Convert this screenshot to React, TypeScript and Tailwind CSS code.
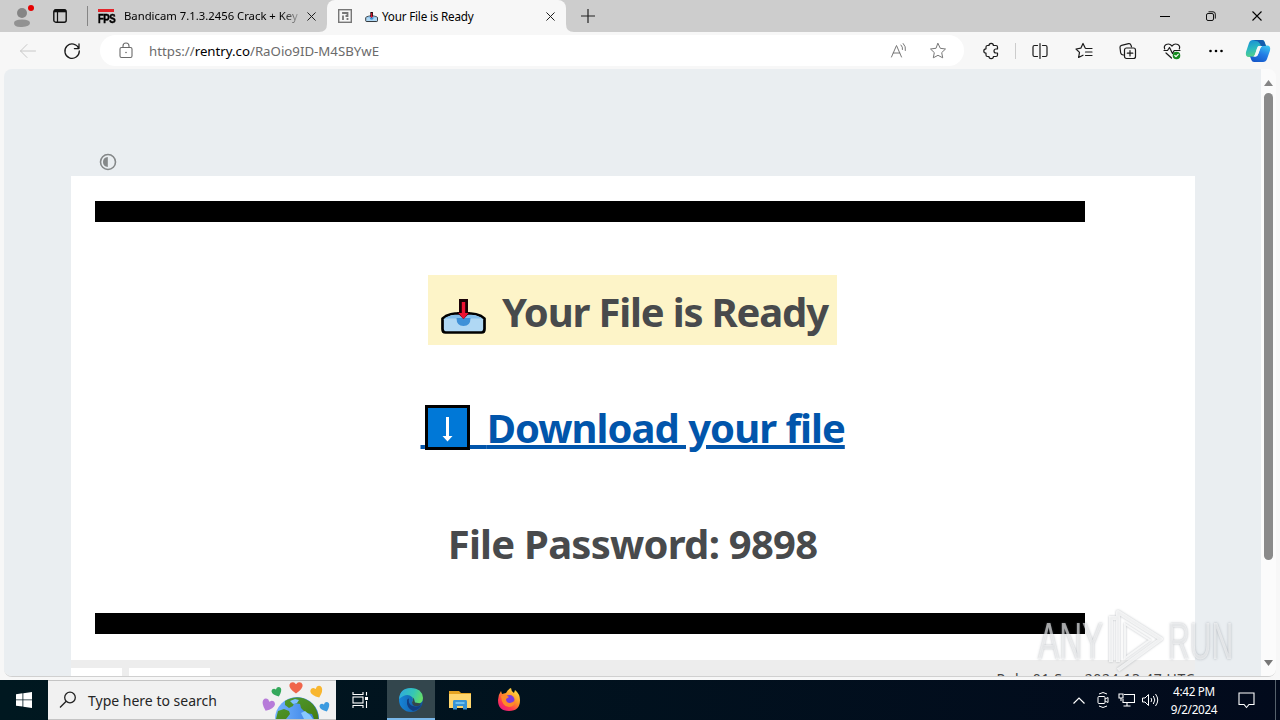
import type { ReactNode } from "react";

const ui = "font-['Noto_Sans','Open_Sans',sans-serif]";

function Stroke({ className, children, w = 1 }: { className: string; children: ReactNode; w?: number }) {
  return (
    <svg viewBox="0 0 20 20" className={`shrink-0 ${className}`} fill="none" stroke="currentColor" strokeWidth={w} strokeLinecap="round" strokeLinejoin="round">
      {children}
    </svg>
  );
}

function Cross({ className }: { className: string }) {
  return (
    <svg viewBox="0 0 10 10" className={`shrink-0 ${className}`} fill="none" stroke="currentColor" strokeWidth="1.1">
      <path d="M.5.5l9 9M9.5.5l-9 9" />
    </svg>
  );
}

function InboxTray({ className }: { className: string }) {
  return (
    <svg viewBox="0 0 46 37" className={className}>
      <path d="M2.500 20.500L6 18q5-2.500 9-2.500h16q5 0 10 2.500l3.500 2.500V31q0 3.500-3 3.500h-36q-3 0-3-3.500z" fill="#b0d8f4" stroke="#000" strokeWidth="2.700" strokeLinejoin="round" />
      <path d="M4 20.500q6-3.500 11-3.500h16q6 0 11.500 3.500z" fill="#83beec" />
      <path d="M16.500 20h14q0 8-7 8t-7-8z" fill="#3f91d8" />
      <path d="M19 1h9v13h2.500l-7 7-7-7H19z" fill="#1a0005" />
      <path d="M21.800 4h3.400v11h3.300l-5 6-5-6h3.300z" fill="#ee1233" />
    </svg>
  );
}

function TabStrip() {
  return (
    <header className="flex h-8 items-center bg-[#cdcdcd] text-[#1b1b1b]">
      <svg viewBox="0 0 24 28" className="ml-3 h-7 w-6 shrink-0">
        <circle cx="10" cy="11" r="5" fill="#858585" />
        <path d="M2 21q0-3.500 8-3.500t8 3.500-8 4-8-4z" fill="#929292" />
        <circle cx="19" cy="6" r="3" fill="#e50000" />
      </svg>
      <svg viewBox="0 0 14 14" className="ml-[17px] h-[14px] w-[14px] shrink-0" fill="none" stroke="#111">
        <rect x=".8" y=".8" width="12.400" height="12.400" rx="2" strokeWidth="1.400" />
        <path d="M1 2h12" strokeWidth="2.600" />
        <path d="M4.500 3v10" strokeWidth="1.200" />
      </svg>
      <div className="ml-5 h-5 w-px bg-[#858585]" />
      <div className="ml-[10px] flex h-4 w-[17px] flex-col">
        <div className="mt-px h-[3px] w-4 shrink-0 bg-[#e3252b]" />
        <div className="mt-[2px] origin-left scale-x-[0.800] font-['Liberation_Sans',sans-serif] text-[12px] leading-[11px] font-bold tracking-[-0.700px] whitespace-nowrap text-black [-webkit-text-stroke:0.500px_black]">FPS</div>
      </div>
      <div className="ml-[9px] w-[175px] bg-gradient-to-r from-black from-88% to-[#aaaaaa] bg-clip-text text-[11.300px] leading-4 whitespace-nowrap text-transparent">Bandicam 7.1.3.2456 Crack + Key</div>
      <Cross className="ml-[8px] h-[9px] w-[9px]" />
      <svg viewBox="0 0 8 8" className="ml-[3px] h-2 w-2 shrink-0 self-end"><path d="M8 0v8H0Q8 8 8 0z" fill="#f7f7f7" /></svg>
      <div className="flex h-8 w-[239px] shrink-0 items-center rounded-t-lg bg-[#f7f7f7]">
        <svg viewBox="0 0 14 14" className="ml-[11px] h-[14px] w-[14px] shrink-0" fill="none" stroke="#777">
          <rect x=".7" y=".7" width="12.600" height="12.600" strokeWidth="1.400" />
          <path d="M5 3v2M5 6.500V11M5 4h4.500v3H7.500M9.500 9v2" strokeWidth="1.800" />
        </svg>
        <InboxTray className="mt-[2px] ml-[13px] h-[12px] w-[13px] shrink-0" />
        <div className="ml-1 w-[160px] text-[11.700px] leading-4 tracking-[-0.200px] whitespace-nowrap text-black">Your File is Ready</div>
        <Cross className="ml-1 h-[9px] w-[9px]" />
      </div>
      <svg viewBox="0 0 8 8" className="h-2 w-2 shrink-0 self-end"><path d="M0 0v8h8Q0 8 0 0z" fill="#f7f7f7" /></svg>
      <svg viewBox="0 0 14 14" className="ml-[7px] h-[14px] w-[14px] shrink-0" stroke="#222" strokeWidth="1.200"><path d="M7 0v14M0 7h14" /></svg>
      <div className="ml-auto mr-[18px] flex items-center gap-9">
        <div className="h-px w-[10px] bg-black" />
        <svg viewBox="0 0 10 10" className="h-[10px] w-[10px]" fill="none" stroke="#111"><rect x=".5" y="2.500" width="7" height="7" rx="1.500" /><path d="M2.500.8H7q2.300 0 2.300 2.300v4.500" /></svg>
        <Cross className="h-[10px] w-[10px] text-black" />
      </div>
    </header>
  );
}

function Toolbar() {
  return (
    <div className="flex h-[37px] items-center bg-[#f7f7f7] text-[#1b1b1b]">
      <Stroke className="ml-[18px] h-5 w-5 text-[#c8c8c8]"><path d="M2.500 10h15M9 3.500L2.500 10 9 16.500" /></Stroke>
      <Stroke className="ml-6 h-5 w-5" w={1.300}><path d="M16.800 7.500A7.200 7.200 0 1 0 17.300 10M17 3v4.600h-4.600" /></Stroke>
      <div className="ml-[18px] flex h-[31px] w-[864px] items-center rounded-full bg-white">
        <svg viewBox="0 0 14 17" className="ml-[19px] h-[17px] w-[14px]" fill="none" stroke="#6b6b6b" strokeWidth="1.100">
          <rect x="1" y="5.500" width="12" height="10" rx="1.500" /><path d="M4 5.500V4a3 3 0 0 1 6 0v1.500" /><circle cx="7" cy="10.500" r=".8" fill="#6b6b6b" stroke="none" />
        </svg>
        <div className="ml-4 w-[700px] text-[13.250px] leading-5 whitespace-nowrap text-[#6b6b6b]">https://<span className="text-black">rentry.co</span>/RaOio9ID-M4SBYwE</div>
        <Stroke className="ml-[40px] h-5 w-5 text-[#777]"><path d="M2.500 16L7.500 4.500l5 11.500M4.200 12h6.600M12 4q2 2 1.500 4.500M14.200 2.500q3 3 2.200 7" /></Stroke>
        <Stroke className="ml-[19px] h-5 w-5 text-[#777]"><path d="M10 2.500l2.300 4.800 5.200.7-3.800 3.600 1 5.200L10 14.300l-4.700 2.500 1-5.200L2.500 8l5.200-.7z" /></Stroke>
      </div>
      <Stroke className="ml-[17px] h-5 w-5" w={1.200}><path d="M6 4.500h2a2.200 2.200 0 0 1 4.400 0H15q1.500 0 1.500 1.500v2h-1.500a2 2 0 0 0 0 4h1.500v2q0 1.500-1.500 1.500h-2.600a2.200 2.200 0 0 1-4.400 0H6.500Q5 15.500 5 14v-1.800a2.200 2.200 0 0 1 0-4.400V6q0-1.500 1.500-1.500z" /></Stroke>
      <div className="ml-[14px] h-4 w-px bg-[#ccc]" />
      <Stroke className="ml-[14px] h-5 w-5" w={1.200}><path d="M7.500 4.500h-3Q3 4.500 3 6v8q0 1.500 1.500 1.500h3M12.500 4.500h3Q17 4.500 17 6v8q0 1.500-1.500 1.500h-3M10 2.500v15" /></Stroke>
      <Stroke className="ml-6 h-5 w-5" w={1.200}><path d="M11.200 7L9 2.500 6.800 7.200 2 8l3.500 3.400-.9 5.100L9 14.200M12 7.500h6M11.500 11H18M11.500 14.500H18" /></Stroke>
      <Stroke className="ml-6 h-5 w-5" w={1.200}><path d="M5.500 14Q3 13.800 2.600 11.500L2 6.500Q1.800 4.700 3.600 4.300l7-1.600q1.700-.4 2.400 1.500l.5 1.700" /><rect x="6.500" y="7" width="11" height="10.500" rx="2" /><path d="M12 9.500v5.500M9.300 12.200h5.500" /></Stroke>
      <Stroke className="ml-6 h-5 w-5" w={1.200}><path d="M2.700 8Q1.500 5 4.200 3.500 7.500 2 10 5q2.500-3 5.800-1.500Q18.500 5 17.300 8M2 9.500h3.500L7.500 6.500l3 6L12.200 9.500H18M4 12l5.500 5" /><circle cx="14.500" cy="14.500" r="3.200" fill="#168b20" stroke="#168b20" /><path d="M12.800 14.500l1.200 1.200 2.200-2.400" stroke="white" /></Stroke>
      <svg viewBox="0 0 14 4" className="ml-[27px] h-1 w-[14px] shrink-0"><circle cx="1.500" cy="2" r="1.300" /><circle cx="7" cy="2" r="1.300" /><circle cx="12.500" cy="2" r="1.300" /></svg>
      <svg viewBox="0 0 26 24" className="ml-[22px] h-6 w-[26px] shrink-0">
        <defs>
          <linearGradient id="copA" x1="0" y1="0" x2=".3" y2="1"><stop stopColor="#1689d8" /><stop offset=".55" stopColor="#2bb9c0" /><stop offset="1" stopColor="#57d086" /></linearGradient>
          <linearGradient id="copB" x1=".8" y1="0" x2=".3" y2="1"><stop stopColor="#39c2ef" /><stop offset=".5" stopColor="#227ce5" /><stop offset="1" stopColor="#1557c9" /></linearGradient>
        </defs>
        <path d="M8 1h9q2 0 2.600 2L21 7h-6q-2 0-3 3l-2 6q-1 2-3 2H4q-4 0-3-5L4 4q1-3 4-3z" fill="url(#copA)" />
        <path d="M18 23H9q-2 0-2.600-2L5 17.500h5.500q2 0 3-3l2-5.500q1-2.500 3-2.500H22q4 0 3 5l-3 8.500q-1 3-4 3z" fill="url(#copB)" />
        <path d="M8 1h9q2 0 2.600 2L21 7h-5q-2-5-5-5z" fill="#155cad" />
        <path d="M13.500 7h3.500q-1.300.8-2 2.800l-2 5.500q-.6 2-2 2.200H8.500q1-.8 1.500-2.200l2-6Q12.500 7.500 13.500 7z" fill="#f7f7f7" />
      </svg>
    </div>
  );
}

function Document() {
  return (
    <main className="flex min-w-0 flex-1 flex-col bg-[#eaeef1] pl-[67px] pr-[66px]">
      <svg viewBox="0 0 18 18" className="mt-[84px] ml-7 h-[18px] w-[18px] shrink-0"><circle cx="9" cy="9" r="7.500" fill="none" stroke="#858889" strokeWidth="1.600" /><path d="M8.800 4v10Q4 13.500 4 9t4.800-5z" fill="#858889" /></svg>
      <article className="mt-[5px] flex h-[484px] shrink-0 flex-col items-center bg-white text-[#484a4c]">
        <div className="mt-[25px] ml-6 h-[21px] w-[990px] shrink-0 self-start bg-black" />
        <h1 className="mt-[53px] mr-px flex h-[70px] w-[409px] shrink-0 bg-[#fdf4c8]">
          <InboxTray className="mt-[23px] ml-3 h-[37px] w-[46px] shrink-0" />
          <span className="ml-4 text-[40px] leading-[74px] font-bold tracking-[-1.180px] whitespace-nowrap">Your File is Ready</span>
        </h1>
        <h1 className="mt-[56px] h-[58px] shrink-0 text-[40px] leading-[54px] font-bold whitespace-nowrap">
          <a className="block w-[425px] text-[#0155ab] underline decoration-[4px] underline-offset-[2px]">
            <span className="text-[17px]">&nbsp;</span>
            <svg viewBox="0 0 45 45" className="inline-block h-[45px] w-[45px] align-[-7px]"><path d="M1.500 1.500h42v42h-42z" fill="#0078d7" stroke="#000" strokeWidth="3" /><path d="M21 12h3v19h3.500l-5 5.500-5-5.500H21z" fill="white" /></svg>
            <span className="tracking-[-1.970px]">&nbsp; </span><span className="tracking-[-0.980px]">Download your file</span>
          </a>
        </h1>
        <h1 className="mt-[58px] mr-px h-[58px] shrink-0 text-[40px] leading-[54px] font-bold tracking-[-0.750px] whitespace-nowrap">File Password: 9898</h1>
        <div className="mt-auto mb-[26px] ml-6 h-[21px] w-[990px] shrink-0 self-start bg-black" />
      </article>
      <footer className="flex h-[17px] shrink-0 items-start bg-[#ededed]">
        <div className="mt-2 h-2 w-[51px] bg-white" />
        <div className="mt-2 ml-[7px] h-2 w-[81px] bg-white" />
        <div className="mt-[12px] ml-auto text-[14px] leading-[14px] tracking-[0.620px] whitespace-nowrap text-[#444]">Pub: 01 Sep 2024 13:47 UTC</div>
      </footer>
    </main>
  );
}

function ScrollBar() {
  return (
    <div className="flex w-[15px] shrink-0 flex-col items-center bg-[#fbfbfb]">
      <svg viewBox="0 0 9 6" className="mt-[11px] h-[6px] w-[9px] shrink-0"><path d="M4.500 0L9 6H0z" fill="#858585" /></svg>
      <div className="mt-[7px] h-[467px] w-[9px] shrink-0 rounded-full bg-[#8a8a8a]" />
      <svg viewBox="0 0 9 6" className="mt-auto mb-[10px] h-[6px] w-[9px] shrink-0"><path d="M4.500 6L0 0h9z" fill="#777" /></svg>
    </div>
  );
}

function Heart({ color, t }: { color: string; t: string }) {
  return <path transform={t} fill={color} d="M0 5.500Q-6 1-5.500-2.500-4.500-5.500-1.500-4.500L0-3l1.500-1.500Q4.500-5.500 5.500-2.500 6 1 0 5.500z" />;
}

function SearchBox() {
  return (
    <div className="flex h-10 w-72 shrink-0 items-center border-y border-[#c4c4c4] bg-[#f1f1f1] text-[#252525]">
      <svg viewBox="0 0 18 18" className="ml-[11px] h-[18px] w-[18px] shrink-0" fill="none" stroke="#222" strokeWidth="1.300"><circle cx="11" cy="6.500" r="5.300" /><path d="M7.200 10.300L1 16.500" /></svg>
      <div className="mt-px ml-[11px] w-[149px] text-[14px] leading-5 whitespace-nowrap">Type here to search</div>
      <svg viewBox="0 0 70 38" className="ml-[24px] h-[38px] w-[70px] shrink-0">
        <defs><linearGradient id="sea" x1="0" x2="1"><stop stopColor="#75b4ff" /><stop offset="1" stopColor="#317ae0" /></linearGradient><linearGradient id="land" x1="0" x2="1" y2="1"><stop stopColor="#4e9e32" /><stop offset="1" stopColor="#477c12" /></linearGradient></defs>
        <circle cx="36" cy="38" r="22" fill="url(#sea)" />
        <path d="M24 20Q30 16 38 16.500q9 1 14.500 7.500 4.500 6 5 14H53l-2-5-6-1-5-5-1-4-6-1-1 3-4 2-4-3zM17 30l6-2 5 2 1 3-4 5H15z" fill="url(#land)" />
        <path d="M29 20l5-2 4 1-2 3-4 1z" fill="#7fc0ff" />
        <path d="M40 32l4-2 5 4 3 4h-9z" fill="#87c8ff" />
        <Heart color="#b77bd9" t="translate(7 24) rotate(22) scale(1.150)" />
        <Heart color="#35a95c" t="translate(16 11) rotate(-22) scale(.9)" />
        <Heart color="#f0654b" t="translate(35 6.500) scale(1.200 1.100)" />
        <Heart color="#f8b62f" t="translate(56 11) rotate(-22) scale(1.100)" />
        <Heart color="#3c9be0" t="translate(64 26) rotate(-22) scale(.9)" />
      </svg>
    </div>
  );
}

function Taskbar() {
  return (
    <footer className="relative flex h-10 items-center bg-gradient-to-r from-[#001820] to-[#020a1c] text-white">
      <div className="flex w-12 shrink-0 justify-center">
        <svg viewBox="0 0 16 16" className="h-4 w-4"><path d="M0 2.200L6.500 1.300v6.200H0zM7.300 1.200L16 0v7.500H7.300zM0 8.300h6.500v6.300L0 13.700zM7.300 8.300H16V16l-8.700-1.200z" fill="white" /></svg>
      </div>
      <SearchBox />
      <div className="flex w-[51px] shrink-0 justify-center">
        <svg viewBox="0 0 17 16" className="mr-[3px] h-4 w-[17px]" fill="none" stroke="white" strokeWidth="1.100"><path d="M1 0v2.500h10V0M1 16v-2.500h10V16M14.500 0v3.500M14.500 9v7" /><rect x="1" y="5" width="10" height="6" /><path d="M13 5h3v3h-3z" fill="white" stroke="none" /></svg>
      </div>
      <div className="flex h-10 w-12 shrink-0 flex-col items-center border-b-2 border-[#79b8ea] bg-[#33464d]">
        <svg viewBox="0 0 26 26" className="mt-[7px] h-[26px] w-[26px]">
          <defs><linearGradient id="edgeTop" x1="0" x2="1" y1=".3" y2=".6"><stop stopColor="#2fa9de" /><stop offset=".55" stopColor="#35c6b5" /><stop offset="1" stopColor="#68df62" /></linearGradient><linearGradient id="edgeLow" x1="0" x2="1"><stop stopColor="#1685d8" /><stop offset="1" stopColor="#135199" /></linearGradient></defs>
          <circle cx="13" cy="13" r="12" fill="url(#edgeLow)" />
          <path d="M1 12Q2 1 13 1t12 10q0 6-7 6-4.500 0-4-2 2-2 0-5Q9 5 1 12z" fill="url(#edgeTop)" />
          <path d="M9 13q-1 8 6 11 6-1 8.500-6-5 3-10 .5-3.500-2-2.500-7Q9.500 11.500 9 13z" fill="#123f83" />
          <path d="M14 15q2-2 .5-5Q17 12 17 15.500l6 1q-1 2.500-4 2.700-5 0-5-4.200z" fill="#33464d" />
        </svg>
      </div>
      <svg viewBox="0 0 22 20" className="ml-[14px] h-5 w-[22px] shrink-0"><path d="M0 1h10l2 2h10v5H0z" fill="#e5a422" /><path d="M0 4h22v14H0z" fill="#ffd66d" /><path d="M4 19.500v-8q0-1.500 1-1.500h12q1 0 1 1.500v8h-4V16H8v3.500z" fill="#3994d4" /><path d="M6.500 12h9v2h-9z" fill="#6fc1ef" /></svg>
      <svg viewBox="0 0 24 24" className="ml-[26px] h-6 w-6 shrink-0">
        <defs><linearGradient id="fox" x1=".9" x2=".2" y2="1"><stop stopColor="#fff04a" /><stop offset=".45" stopColor="#ff9327" /><stop offset=".75" stopColor="#ff3850" /><stop offset="1" stopColor="#e81884" /></linearGradient></defs>
        <path d="M4 3l1 3 4-1q2-4 5-5 0 3 3 5l1-3q5 4 5 10 0 11-11 11T1 12q0-5 3-9z" fill="url(#fox)" />
        <circle cx="12.500" cy="12" r="5" fill="#7c3bdd" /><path d="M4 8q5-2 8 1l-3 2q0 4 4 4 3 0 5-3 0 7-6 7-7 0-8-11z" fill="#ff8a28" />
      </svg>
      <div className="ml-auto flex h-10 items-center">
        <svg viewBox="0 0 12 7" className="h-[7px] w-3" fill="none" stroke="white" strokeWidth="1.200"><path d="M.5 6.500L6 1l5.500 5.500" /></svg>
        <svg viewBox="0 0 12 18" className="ml-[12px] h-[18px] w-3" fill="none" stroke="white"><rect x="1" y="5.500" width="7" height="7" rx="1" /><path d="M8 8l3-1.500v5L8 10M2 3q4-3 8 0M2 15q4 3 8 0" /></svg>
        <svg viewBox="0 0 17 14" className="ml-[9px] h-[14px] w-[17px]" fill="none" stroke="white" strokeWidth="1.100"><path d="M6 1.500h10.500v8H5V6M9 9.500V13M5.500 13h7M1 1h4v4H1zM3 5v3" /></svg>
        <svg viewBox="0 0 17 14" className="ml-[7px] h-[14px] w-[17px]" fill="none" stroke="white"><path d="M.5 5h2.500l3.500-3.500v11L3 9H.5zM9 5q1.500 2 0 4M11.300 3q3 4 0 8M13.500 1q4.500 6 0 12" /></svg>
        <div className="ml-[9px] w-[52px] text-center text-[11.700px] leading-[18px] tracking-[-0.300px] whitespace-nowrap"><div>4:42 PM</div><div>9/2/2024</div></div>
        <svg viewBox="0 0 17 17" className="ml-[18px] h-[17px] w-[17px]" fill="none" stroke="white" strokeWidth="1.100"><path d="M1 1h15v11.500h-5L8.500 15.500 6 12.500H1z" /></svg>
        <div className="ml-[20px] mr-1 h-10 w-px bg-[#56616c]" />
      </div>
    </footer>
  );
}

function Watermark() {
  return (
    <div className="pointer-events-none absolute top-[608px] left-[1038px] flex h-[66px] w-[200px] items-center font-['Liberation_Sans',sans-serif] text-[52px] leading-[66px] text-white/60 [text-shadow:0_0_3px_rgba(90,100,110,0.450)]">
      <div className="w-[66px]"><div className="origin-left scale-x-[0.610] whitespace-nowrap">ANY</div></div>
      <svg viewBox="0 0 60 66" className="h-[66px] w-[60px] shrink-0 drop-shadow-[0_0_1px_rgba(80,90,100,0.500)]" fill="none" stroke="rgba(255,255,255,.75)" strokeWidth="4"><path d="M14 54V4l43 27-43 31" strokeLinejoin="round" /><path d="M21 16v34l25-18z" strokeWidth="2" /><path d="M7 54V10h5" strokeWidth="4" /></svg>
      <div className="ml-1 w-[66px]"><div className="origin-left scale-x-[0.580] whitespace-nowrap">RUN</div></div>
    </div>
  );
}

export default function App() {
  return (
    <div className={`relative flex h-[720px] w-[1280px] flex-col overflow-hidden bg-[#f7f7f7] ${ui}`}>
      <TabStrip />
      <Toolbar />
      <div className="mx-1 flex h-[608px] shrink-0 overflow-hidden rounded-lg border-b border-[#d0d0d0]">
        <Document />
        <ScrollBar />
      </div>
      <div className="h-[3px] shrink-0" />
      <Taskbar />
      <Watermark />
    </div>
  );
}
